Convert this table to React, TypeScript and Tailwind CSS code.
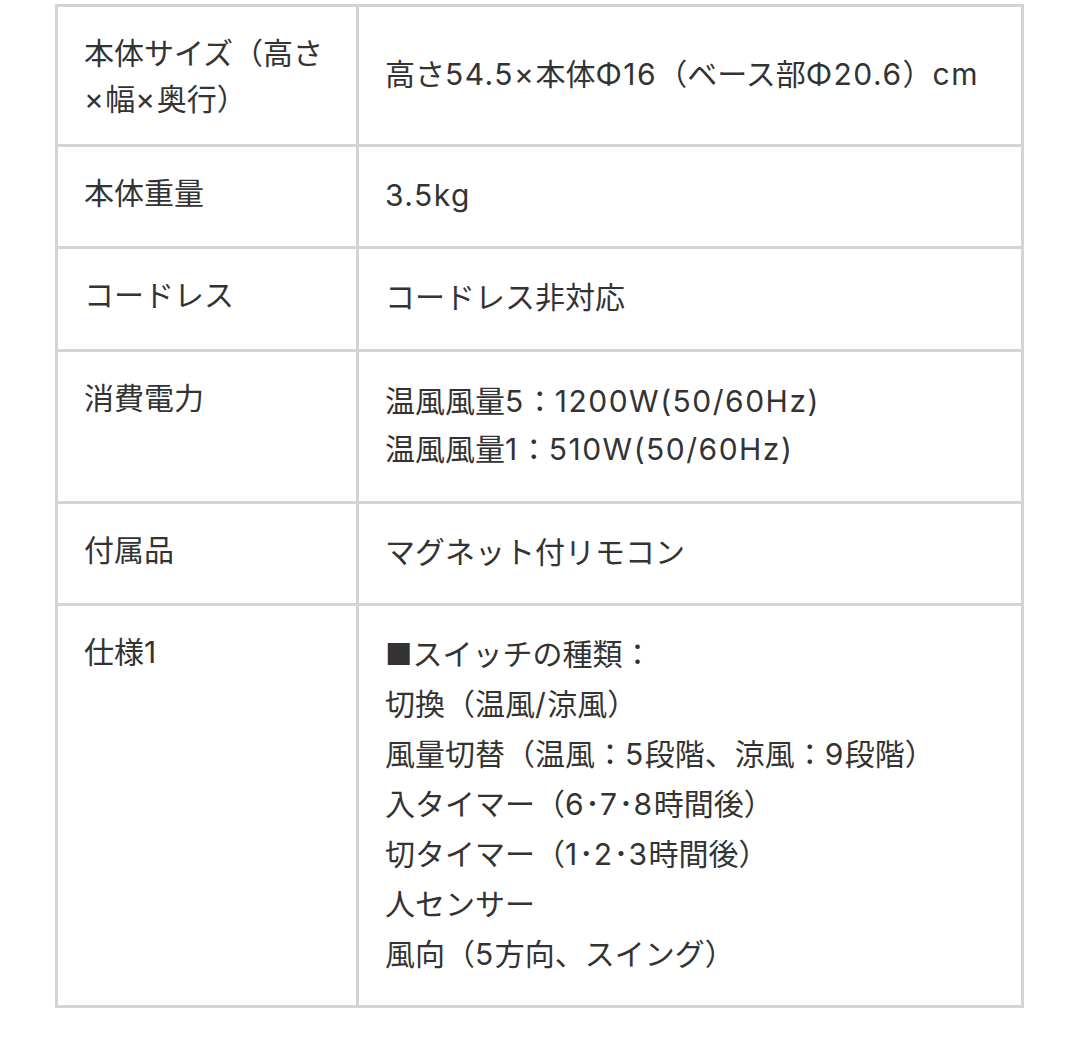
import React from "react";

type Row = { label: string[]; value: string[]; h: string; lh: string };

const rows: Row[] = [
  { label: ["本体サイズ（高さ", "×幅×奥行）"], value: ["高さ54.5×本体Φ16（ベース部Φ20.6）cm"], h: "h-[137px]", lh: "leading-[48px]" },
  { label: ["本体重量"], value: ["3.5kg"], h: "h-[102px]", lh: "leading-[48px]" },
  { label: ["コードレス"], value: ["コードレス非対応"], h: "h-[103px]", lh: "leading-[48px]" },
  { label: ["消費電力"], value: ["温風風量5：1200W(50/60Hz)", "温風風量1：510W(50/60Hz)"], h: "h-[152px]", lh: "leading-[48px]" },
  { label: ["付属品"], value: ["マグネット付リモコン"], h: "h-[102px]", lh: "leading-[48px]" },
  {
    label: ["仕様1"],
    value: [
      "■スイッチの種類：",
      "切換（温風/涼風）",
      "風量切替（温風：5段階、涼風：9段階）",
      "入タイマー（6･7･8時間後）",
      "切タイマー（1･2･3時間後）",
      "人センサー",
      "風向（5方向、スイング）",
    ],
    h: "h-[402px]",
    lh: "leading-[50px]",
  },
];

function Txt({ s }: { s: string }) {
  const parts = s.split(/([0-9A-Za-z.()\/×Φ]+)/);
  return (
    <>
      {parts.map((p, i) =>
        /^[0-9A-Za-z.()\/×Φ]+$/.test(p) ? (
          <span key={i} className="tracking-[1.5px]">
            {p}
          </span>
        ) : (
          <React.Fragment key={i}>{p}</React.Fragment>
        )
      )}
    </>
  );
}

export default function App() {
  return (
    <div
      className="w-[1080px] h-[1045px] bg-white pl-[55px] pt-[4px] text-[#333333] text-[30px]"
      style={{ fontFamily: 'Inter, "Noto Sans CJK JP", "Noto Sans", sans-serif' }}
    >
      <div className="w-[969px] border-[3px] border-[#d4d4d4]">
        {rows.map((r, i) => (
          <div
            key={i}
            className={`flex ${r.h} ${i > 0 ? "border-t-[3px] border-[#d4d4d4]" : ""}`}
          >
            <div className="w-[301px] shrink-0 border-r-[3px] border-[#d4d4d4] px-[26px] pt-[23px] leading-[46px]">
              {r.label.map((l, j) => (
                <div key={j} className="whitespace-nowrap">
                  <Txt s={l} />
                </div>
              ))}
            </div>
            <div className={`flex-1 flex flex-col justify-center px-[26px] pb-[4px] ${r.lh}`}>
              {r.value.map((v, j) => (
                <div key={j} className="whitespace-nowrap">
                  <Txt s={v} />
                </div>
              ))}
            </div>
          </div>
        ))}
      </div>
    </div>
  );
}
